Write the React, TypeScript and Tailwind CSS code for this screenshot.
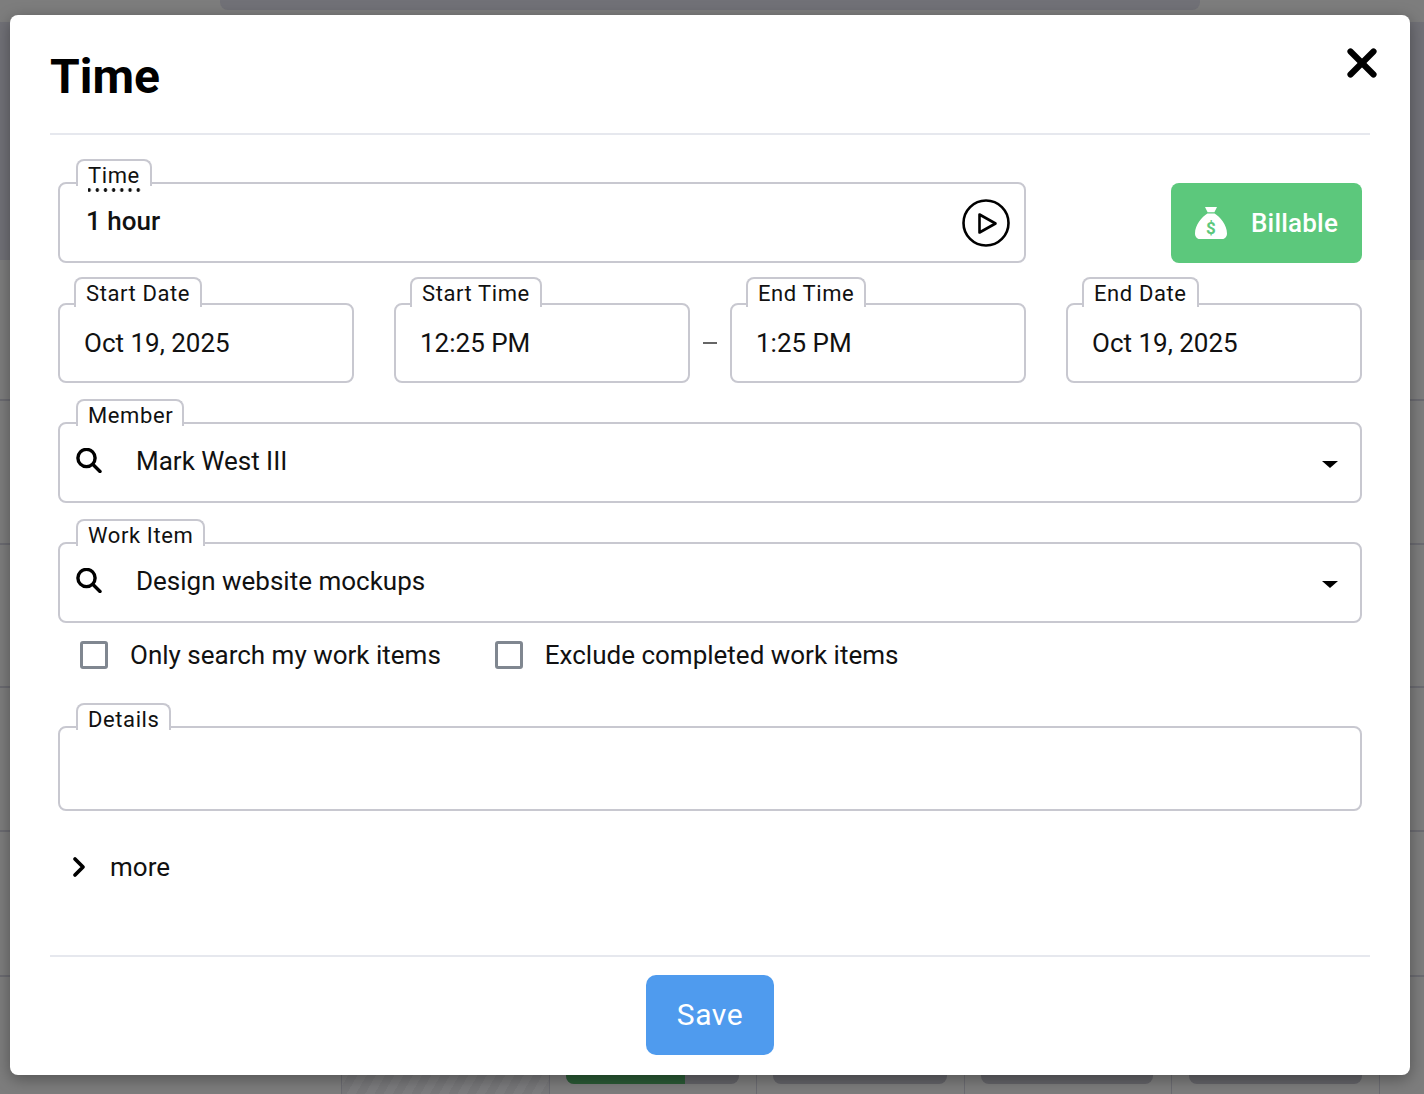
import { ChevronRight, X } from 'lucide-react'

const labelCls = "absolute bg-white border-2 border-b-0 border-[#c8c8d0] rounded-t-lg px-[10px] text-[22px] leading-[30px] text-[#111] tracking-[0.6px] whitespace-nowrap"
const boxCls = "relative rounded-lg border-2 border-[#c8c8d0] bg-white"
const valueCls = "text-[26px] leading-[32px] text-[#111]"

function DateField({ label, value, labelW }: { label: string; value: string; labelW: string }) {
  return (
    <div className={`${boxCls} h-[80px] w-[296px]`}>
      <span className={`${labelCls} left-[14px] -top-[28px] h-[30px] ${labelW}`}>{label}</span>
      <div className={`${valueCls} pl-[24px] pt-[22px]`}>{value}</div>
    </div>
  )
}

function SearchIcon() {
  return (
    <svg viewBox="0 0 26 25" className="ml-[16px] mt-[24px] w-[26px] h-[25px] shrink-0" fill="none" stroke="#000" strokeWidth="3.400" strokeLinecap="round">
      <circle cx="10.500" cy="10" r="8.600" />
      <path d="M17 16.500 24 23.500" />
    </svg>
  )
}

function SelectField({ label, value, labelW }: { label: string; value: string; labelW: string }) {
  return (
    <div className={`${boxCls} h-[81px] flex items-start`}>
      <span className={`${labelCls} left-[16px] -top-[25px] h-[27px] ${labelW}`}>{label}</span>
      <SearchIcon />
      <div className={`${valueCls} ml-[34px] pt-[21px]`}>{value}</div>
      <span className="absolute right-[22px] top-[37px] w-0 h-0 border-x-[8px] border-x-transparent border-t-[7px] border-t-black" />
    </div>
  )
}

function Check({ label }: { label: string }) {
  return (
    <label className="flex items-center gap-[22px]">
      <span className="w-[28px] h-[28px] rounded-[3px] border-[3px] border-[#808790] bg-white" />
      <span className={valueCls}>{label}</span>
    </label>
  )
}

const rowLines = ['top-[399px]', 'top-[543px]', 'top-[686px]', 'top-[830px]', 'top-[975px]']
const colLines = ['left-[341px]', 'left-[549px]', 'left-[756px]', 'left-[964px]', 'left-[1171px]', 'left-[1379px]']
const chips = ['left-[773px] w-[174px]', 'left-[981px] w-[172px]', 'left-[1189px] w-[173px]']

export default function App() {
  return (
    <div className="relative w-[1424px] h-[1094px] overflow-hidden bg-[#7d7d7d] font-['Roboto',sans-serif]">
      {/* dimmed page behind the dialog */}
      <div className="absolute left-[220px] top-0 w-[980px] h-[10px] rounded-b-lg bg-[#717177]" />
      <div className="absolute left-0 top-[22px] w-[1424px] h-[238px] bg-[#717177]" />
      {rowLines.map((c) => (
        <div key={c} className={`absolute left-0 w-[1424px] h-[2px] bg-[#6b6b71] ${c}`} />
      ))}
      {colLines.map((c) => (
        <div key={c} className={`absolute top-[975px] w-px h-[119px] bg-[#6b6b71] ${c}`} />
      ))}
      <div className="absolute left-[342px] top-[1070px] w-[207px] h-[24px] bg-[repeating-linear-gradient(120deg,#7c7c7e_0_8px,#777779_8px_16px)]" />
      <div className="absolute left-[566px] top-[1070px] w-[173px] h-[14px] rounded-b-lg bg-[#636368] overflow-hidden">
        <div className="w-[119px] h-full bg-[#2a5a35]" />
      </div>
      {chips.map((c) => (
        <div key={c} className={`absolute top-[1070px] h-[14px] rounded-b-lg bg-[#636368] ${c}`} />
      ))}

      <div className="absolute left-[10px] top-[15px] w-[1400px] h-[1060px] rounded-lg bg-white shadow-[0_4px_16px_rgba(0,0,0,0.35)] px-[40px] flex flex-col">
        <div className="relative h-[120px] border-b-2 border-[#e6e8ee] shrink-0">
          <h1 className="pt-[33px] text-[48px] leading-[58px] font-bold text-black">Time</h1>
          <X size={46} strokeWidth={3.200} className="absolute -right-[15px] top-[25px] text-black" />
        </div>

        <div className="px-[8px] flex-1 flex flex-col">
          <div className="mt-[48px] flex items-start justify-between">
            <div className={`${boxCls} w-[968px] h-[81px] -mt-px`}>
              <span className={`${labelCls} left-[16px] -top-[25px] h-[27px] w-[76px]`}>
                <span className="block w-[54px] h-[31px] bg-[radial-gradient(circle,#111_1.600px,transparent_2px)] bg-[length:8.200px_4px] bg-[position:-3px_bottom] bg-repeat-x">Time</span>
              </span>
              <div className={`${valueCls} pl-[26px] pt-[21px] font-medium`}>1 hour</div>
              <svg viewBox="0 0 48 48" className="absolute right-[14px] top-[15px] w-[48px] h-[48px]" fill="none" stroke="#000" strokeWidth="2.600">
                <circle cx="24" cy="24" r="22.500" />
                <path d="M17.500 15.500 33.500 24.500 17.500 33.500z" strokeLinejoin="round" />
              </svg>
            </div>
            <button className="w-[191px] h-[80px] rounded-lg bg-[#5cc87c] flex items-center pl-[24px] text-white">
              <svg viewBox="0 0 32 32" className="w-[32px] h-[32px]" fill="#fff">
                <path d="M10 0h12l-2.600 5.200h-6.800zM12.400 6.600h7.200C25 10 32 18 32 26.400c0 3-2 5.600-5 5.600H5c-3 0-5-2.600-5-5.600C0 18 7 10 12.400 6.600z" />
                <text x="16" y="27" textAnchor="middle" fontSize="17" fontWeight="700" fill="#5cc87c" fontFamily="Roboto, sans-serif">$</text>
              </svg>
              <span className="ml-[24px] text-[26px] leading-[32px] font-medium tracking-[0.2px]">Billable</span>
            </button>
          </div>

          <div className="mt-[40px] flex items-center">
            <DateField label="Start Date" value="Oct 19, 2025" labelW="w-[128px]" />
            <div className="ml-[40px]"><DateField label="Start Time" value="12:25 PM" labelW="w-[132px]" /></div>
            <span className="w-[40px] flex justify-center pr-px"><span className="w-[14px] h-[2px] bg-[#666]" /></span>
            <DateField label="End Time" value="1:25 PM" labelW="w-[120px]" />
            <div className="ml-[40px]"><DateField label="End Date" value="Oct 19, 2025" labelW="w-[117px]" /></div>
          </div>

          <div className="mt-[39px]">
            <SelectField label="Member" value="Mark West III" labelW="w-[108px]" />
          </div>
          <div className="mt-[39px]">
            <SelectField label="Work Item" value="Design website mockups" labelW="w-[129px]" />
          </div>

          <div className="mt-[16px] pl-[22px] flex items-center gap-[54px]">
            <Check label="Only search my work items" />
            <Check label="Exclude completed work items" />
          </div>

          <div className={`${boxCls} mt-[55px] h-[85px]`}>
            <span className={`${labelCls} left-[16px] -top-[25px] h-[27px] w-[95px]`}>Details</span>
          </div>

          <div className="mt-[40px] flex items-center pl-[5px]">
            <ChevronRight size={32} strokeWidth={2.800} className="text-black" />
            <span className={`${valueCls} ml-[15px]`}>more</span>
          </div>
        </div>

        <div className="h-[120px] shrink-0 border-t-2 border-[#e6e8ee] flex justify-center pt-[18px]">
          <button className="w-[128px] h-[80px] rounded-[10px] bg-[#4f9bee] text-white text-[30px] leading-[78px] tracking-[0.6px]">Save</button>
        </div>
      </div>
    </div>
  )
}
